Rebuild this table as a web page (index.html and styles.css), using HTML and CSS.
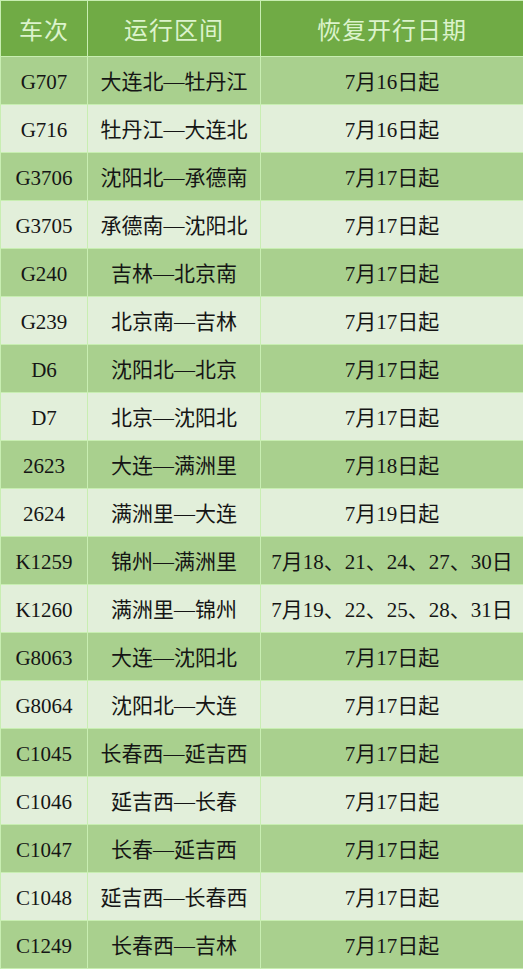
FILE: index.html
```html
<!DOCTYPE html>
<html lang="zh">
<head>
<meta charset="utf-8">
<link rel="stylesheet" href="styles.css">
</head>
<body>
<table class="tbl">
<colgroup><col class="c1"><col class="c2"><col class="c3"></colgroup>
<thead>
<tr><th>车次</th><th>运行区间</th><th>恢复开行日期</th></tr>
</thead>
<tbody>
<tr><td>G707</td><td>大连北—牡丹江</td><td>7月16日起</td></tr>
<tr><td>G716</td><td>牡丹江—大连北</td><td>7月16日起</td></tr>
<tr><td>G3706</td><td>沈阳北—承德南</td><td>7月17日起</td></tr>
<tr><td>G3705</td><td>承德南—沈阳北</td><td>7月17日起</td></tr>
<tr><td>G240</td><td>吉林—北京南</td><td>7月17日起</td></tr>
<tr><td>G239</td><td>北京南—吉林</td><td>7月17日起</td></tr>
<tr><td>D6</td><td>沈阳北—北京</td><td>7月17日起</td></tr>
<tr><td>D7</td><td>北京—沈阳北</td><td>7月17日起</td></tr>
<tr><td>2623</td><td>大连—满洲里</td><td>7月18日起</td></tr>
<tr><td>2624</td><td>满洲里—大连</td><td>7月19日起</td></tr>
<tr><td>K1259</td><td>锦州—满洲里</td><td>7月18、21、24、27、30日</td></tr>
<tr><td>K1260</td><td>满洲里—锦州</td><td>7月19、22、25、28、31日</td></tr>
<tr><td>G8063</td><td>大连—沈阳北</td><td>7月17日起</td></tr>
<tr><td>G8064</td><td>沈阳北—大连</td><td>7月17日起</td></tr>
<tr><td>C1045</td><td>长春西—延吉西</td><td>7月17日起</td></tr>
<tr><td>C1046</td><td>延吉西—长春</td><td>7月17日起</td></tr>
<tr><td>C1047</td><td>长春—延吉西</td><td>7月17日起</td></tr>
<tr><td>C1048</td><td>延吉西—长春西</td><td>7月17日起</td></tr>
<tr><td>C1249</td><td>长春西—吉林</td><td>7月17日起</td></tr>
</tbody>
</table>
</body>
</html>
```
FILE: styles.css
```css
html, body {
  margin: 0;
  padding: 0;
  background: #ffffff;
}
.tbl {
  border-collapse: collapse;
  table-layout: fixed;
  width: 523px;
  font-family: "Liberation Serif", "Noto Sans CJK SC", serif;
  color: #151515;
}
.c1 { width: 87px; }
.c2 { width: 173px; }
.c3 { width: 263px; }
.tbl th, .tbl td {
  border: 1px solid #c8eeb2;
  text-align: center;
  vertical-align: middle;
  padding: 0;
  white-space: nowrap;
  overflow: hidden;
}
.tbl th {
  height: 56px;
  background: #70ab45;
  color: #dcf3cc;
  font-size: 24px;
  line-height: 24px;
  font-weight: normal;
  letter-spacing: 1px;
  padding-top: 4px;
  box-sizing: border-box;
}
.tbl td {
  height: 48px;
  font-size: 21px;
  line-height: 22px;
  padding-top: 3px;
  box-sizing: border-box;
}
.tbl tbody tr:nth-child(odd) td { background: #a9d08e; }
.tbl tbody tr:nth-child(even) td { background: #e2efda; }
```
